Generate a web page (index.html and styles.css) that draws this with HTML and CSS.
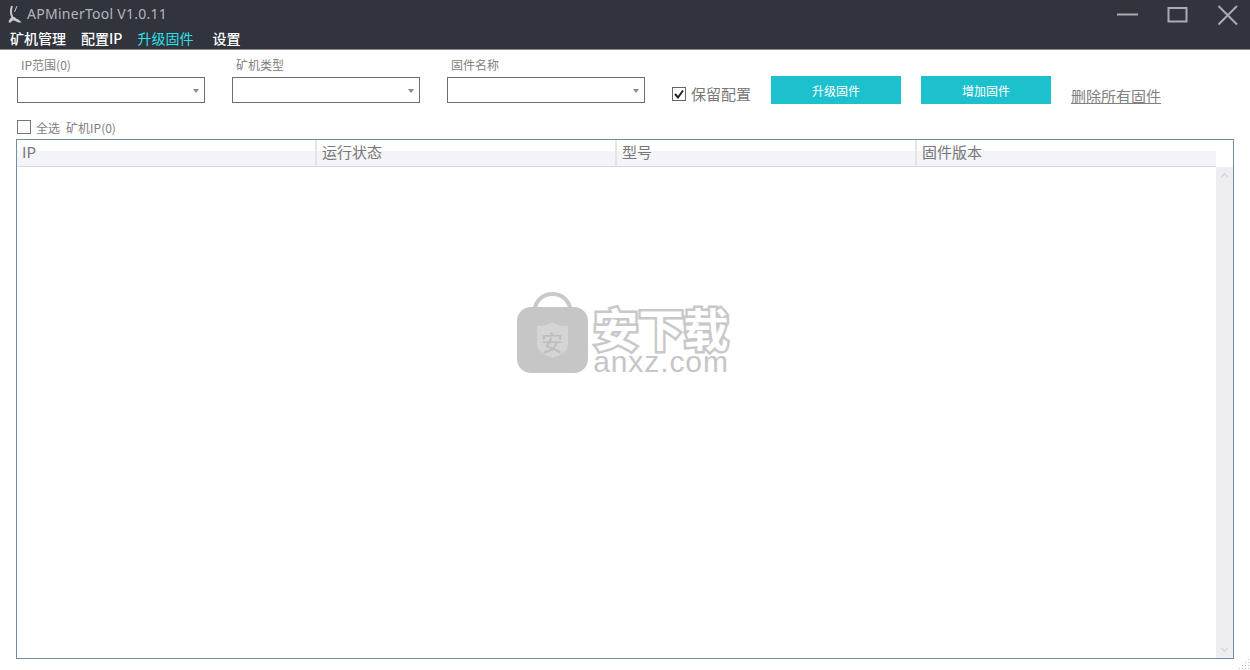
FILE: index.html
```html
<!DOCTYPE html>
<html lang="zh-CN">
<head>
    <meta charset="UTF-8">
    <title>APMinerTool V1.0.11</title>
    <link rel="stylesheet" href="styles.css">
</head>
<body>
    <!-- Title bar and menu -->
    <div class="header">
        <div class="title-row">
            <svg class="app-logo" viewBox="0 0 14 18">
                <path class="logo-arm" d="M4 1C2.500 5 2.500 9 4.500 12.500L7.500 14"/>
                <path class="logo-arm thin" d="M9 1L6.500 7"/>
                <path d="M0.500 17.500C1 14 3 12 5 12L8 13.500C10.500 14.500 12.500 16 13.500 17.500H10.500L6 15.500C4.500 15.500 3.500 16 3 17.500Z"/>
            </svg>
            <span class="app-title">APMinerTool V1.0.11</span>
            <div class="win-buttons">
                <svg class="win-icon" viewBox="0 0 22 22"><path d="M1 11.500H22"/></svg>
                <svg class="win-icon" viewBox="0 0 22 22"><path d="M2.500 5H20.500V18.500H2.500Z"/></svg>
                <svg class="win-icon" viewBox="0 0 22 22"><path d="M2.500 3L21 21.500M21 3L2.500 21.500"/></svg>
            </div>
        </div>
        <div class="menu">
            <span class="menu-item item-miner">矿机管理</span>
            <span class="menu-item item-ip">配置IP</span>
            <span class="menu-item item-fw active">升级固件</span>
            <span class="menu-item">设置</span>
        </div>
    </div>

    <!-- Filter form -->
    <div class="toolbar">
        <div class="field field-ip">
            <label>IP范围(0)</label>
            <div class="select"><span class="caret"></span></div>
        </div>
        <div class="field field-type">
            <label>矿机类型</label>
            <div class="select"><span class="caret"></span></div>
        </div>
        <div class="field field-name">
            <label>固件名称</label>
            <div class="select"><span class="caret"></span></div>
        </div>
        <div class="keep">
            <span class="check">
                <svg viewBox="0 0 12 12"><path d="M2 6L5 9.5L10 2.5"/></svg>
            </span>
            <span>保留配置</span>
        </div>
        <button class="btn btn-upgrade">升级固件</button>
        <button class="btn btn-add">增加固件</button>
        <a class="delete-all">删除所有固件</a>
    </div>

    <div class="select-row">
        <span class="check-small"></span>
        <span class="select-all">全选</span>
        <span>矿机IP(0)</span>
    </div>

    <!-- Miner table -->
    <div class="table">
        <div class="table-head">
            <div class="col">IP</div>
            <div class="col">运行状态</div>
            <div class="col">型号</div>
            <div class="col last">固件版本</div>
        </div>
        <div class="table-body">
            <div class="rows"></div>
            <div class="scrollbar">
                <svg viewBox="0 0 10 6"><path d="M1 5L5 1L9 5"/></svg>
                <svg viewBox="0 0 10 6"><path d="M1 1L5 5L9 1"/></svg>
            </div>
        </div>
    </div>

    <!-- Watermark -->
    <div class="watermark">
        <svg class="wm-bag" viewBox="0 0 71 82">
            <path class="wm-handle" d="M17 20C19 -4 52 -4 54 20"/>
            <rect class="wm-body" x="0" y="15" width="71" height="66" rx="14"/>
            <path class="wm-shield" d="M20 34C27 34 31 33 35.500 30C40 33 44 34 51 34V52C51 60 43 63 35.500 66C28 63 20 60 20 52Z"/>
        </svg>
        <span class="wm-shield-text">安</span>
        <div class="wm-text">
            <div class="wm-cn">安下载</div>
            <div class="wm-en">anxz.com</div>
        </div>
    </div>

    <div class="grip"></div>
</body>
</html>
```

FILE: styles.css
```css
body {
    font-family: "Noto Sans CJK SC", "Liberation Sans", sans-serif;
    margin: 0;
    width: 1250px;
    height: 670px;
    overflow: hidden;
    position: relative;
    background-color: #fff;
    color: #777;
}

/* Header */
.header {
    height: 49px;
    background-color: #31343d;
    border-bottom: 1px solid #8b8d92;
}

.title-row {
    display: flex;
    align-items: center;
    height: 27px;
    padding-left: 8px;
}

.app-logo {
    width: 14px;
    height: 18px;
    fill: #c9cacc;
}

.logo-arm {
    fill: none;
    stroke: #c9cacc;
    stroke-width: 2;
}

.logo-arm.thin {
    stroke-width: 1;
}

.app-title {
    font-family: "Noto Sans", sans-serif;
    font-size: 14px;
    color: #b4b6ba;
    margin-left: 5px;
    letter-spacing: 0.27px;
}

.win-buttons {
    display: flex;
    gap: 28px;
    margin-left: auto;
    margin-right: 12px;
}

.win-icon {
    width: 22px;
    height: 22px;
    fill: none;
    stroke: #a9abaf;
    stroke-width: 2;
    overflow: visible;
}

.menu {
    display: flex;
    height: 22px;
    align-items: center;
    padding-left: 10px;
    font-size: 14px;
    font-weight: 500;
    color: #fff;
}

.menu-item {
    line-height: 22px;
}

.item-miner {
    margin-right: 15px;
}

.item-ip {
    margin-right: 15px;
}

.item-fw {
    margin-right: 19px;
}

.menu-item.active {
    color: #2ee0ea;
    font-weight: 400;
}

/* Toolbar */
.toolbar {
    display: flex;
    align-items: flex-start;
    padding: 7px 0 0 17px;
    height: 60px;
}

.field label {
    display: block;
    font-size: 12px;
    line-height: 16px;
    padding-left: 4px;
    margin-bottom: 4px;
    color: #808080;
}

.field-ip {
    width: 188px;
    margin-right: 27px;
}

.field-type {
    width: 188px;
    margin-right: 27px;
}

.field-name {
    width: 198px;
    margin-right: 27px;
}

.select {
    position: relative;
    height: 24px;
    border: 1px solid #6e6e6e;
    box-sizing: content-box;
}

.caret {
    position: absolute;
    right: 5px;
    top: 11px;
    border-left: 3.5px solid transparent;
    border-right: 3.5px solid transparent;
    border-top: 4px solid #8a8a8a;
}

.keep {
    display: flex;
    align-items: center;
    gap: 5px;
    margin-top: 27px;
    width: 99px;
    font-size: 15px;
    line-height: 20px;
    color: #777;
}

.check {
    display: block;
    flex-shrink: 0;
    width: 12px;
    height: 12px;
    border: 1px solid #666;
}

.check svg {
    display: block;
    width: 12px;
    height: 12px;
    fill: none;
    stroke: #222;
    stroke-width: 2;
}

.btn {
    width: 130px;
    height: 28px;
    margin-top: 19px;
    padding: 0;
    border: none;
    background-color: #1dc1cd;
    color: #fff;
    font-family: inherit;
    font-size: 12px;
}

.btn-upgrade {
    margin-right: 20px;
}

.delete-all {
    margin: 29px 0 0 20px;
    font-size: 15px;
    line-height: 20px;
    color: #808080;
    text-decoration: underline;
}

/* Select all row */
.select-row {
    display: flex;
    align-items: center;
    height: 20px;
    padding-left: 17px;
    font-size: 12px;
    color: #808080;
}

.check-small {
    width: 12px;
    height: 12px;
    border: 1px solid #777;
    margin-right: 5px;
}

.select-all {
    margin-right: 6px;
}

/* Table */
.table {
    display: flex;
    flex-direction: column;
    box-sizing: border-box;
    width: 1218px;
    height: 520px;
    margin: 2px 0 0 16px;
    border: 1px solid #6f8ea0;
}

.table-head {
    display: flex;
    height: 27px;
    width: 1199px;
    box-sizing: border-box;
    border-bottom: 1px solid #d6d8dc;
    background: linear-gradient(#fff 0, #fff 11px, #f3f4f7 11px, #f3f4f7 100%);
}

.col {
    box-sizing: border-box;
    width: 300px;
    padding-left: 5px;
    font-size: 15px;
    line-height: 24px;
    color: #777;
    border-right: 2px solid #e4e5e9;
}

.col.last {
    width: 299px;
    border-right: none;
}

.table-body {
    flex: 1;
    display: flex;
}

.rows {
    flex: 1;
}

.scrollbar {
    display: flex;
    flex-direction: column;
    justify-content: space-between;
    align-items: center;
    width: 17px;
    padding: 6px 0;
    box-sizing: border-box;
    background-color: #eeeef2;
}

.scrollbar svg {
    width: 9px;
    height: 5px;
    fill: none;
    stroke: #d2d2d8;
    stroke-width: 1.4;
}

/* Watermark sits over the table */
.watermark {
    position: absolute;
    left: 517px;
    top: 292px;
    display: flex;
    gap: 4px;
}

.wm-bag {
    width: 71px;
    height: 82px;
}

.wm-handle {
    fill: none;
    stroke: #c9c9c9;
    stroke-width: 4;
}

.wm-body {
    fill: #c6c6c6;
}

.wm-shield {
    fill: #d4d4d4;
}

.wm-shield-text {
    position: absolute;
    left: 24px;
    top: 34px;
    font-size: 22px;
    line-height: 30px;
    color: #bdbdbd;
}

.wm-text {
    display: flex;
    flex-direction: column;
    align-items: center;
    width: 138px;
}

.wm-cn {
    margin-top: 13px;
    font-size: 45px;
    line-height: 46px;
    font-weight: 700;
    color: #fff;
    -webkit-text-stroke: 5px #c8c8c8;
    paint-order: stroke fill;
}

.wm-en {
    font-family: "Liberation Sans", sans-serif;
    font-size: 30px;
    line-height: 22px;
    letter-spacing: 0.9px;
    color: #c6c6c6;
}

/* Resize grip */
.grip {
    position: absolute;
    right: 1px;
    bottom: 1px;
    width: 11px;
    height: 11px;
    background-image: radial-gradient(#c0c0c0 1px, transparent 1px);
    background-size: 3px 3px;
    clip-path: polygon(100% 0, 100% 100%, 0 100%);
}
```
